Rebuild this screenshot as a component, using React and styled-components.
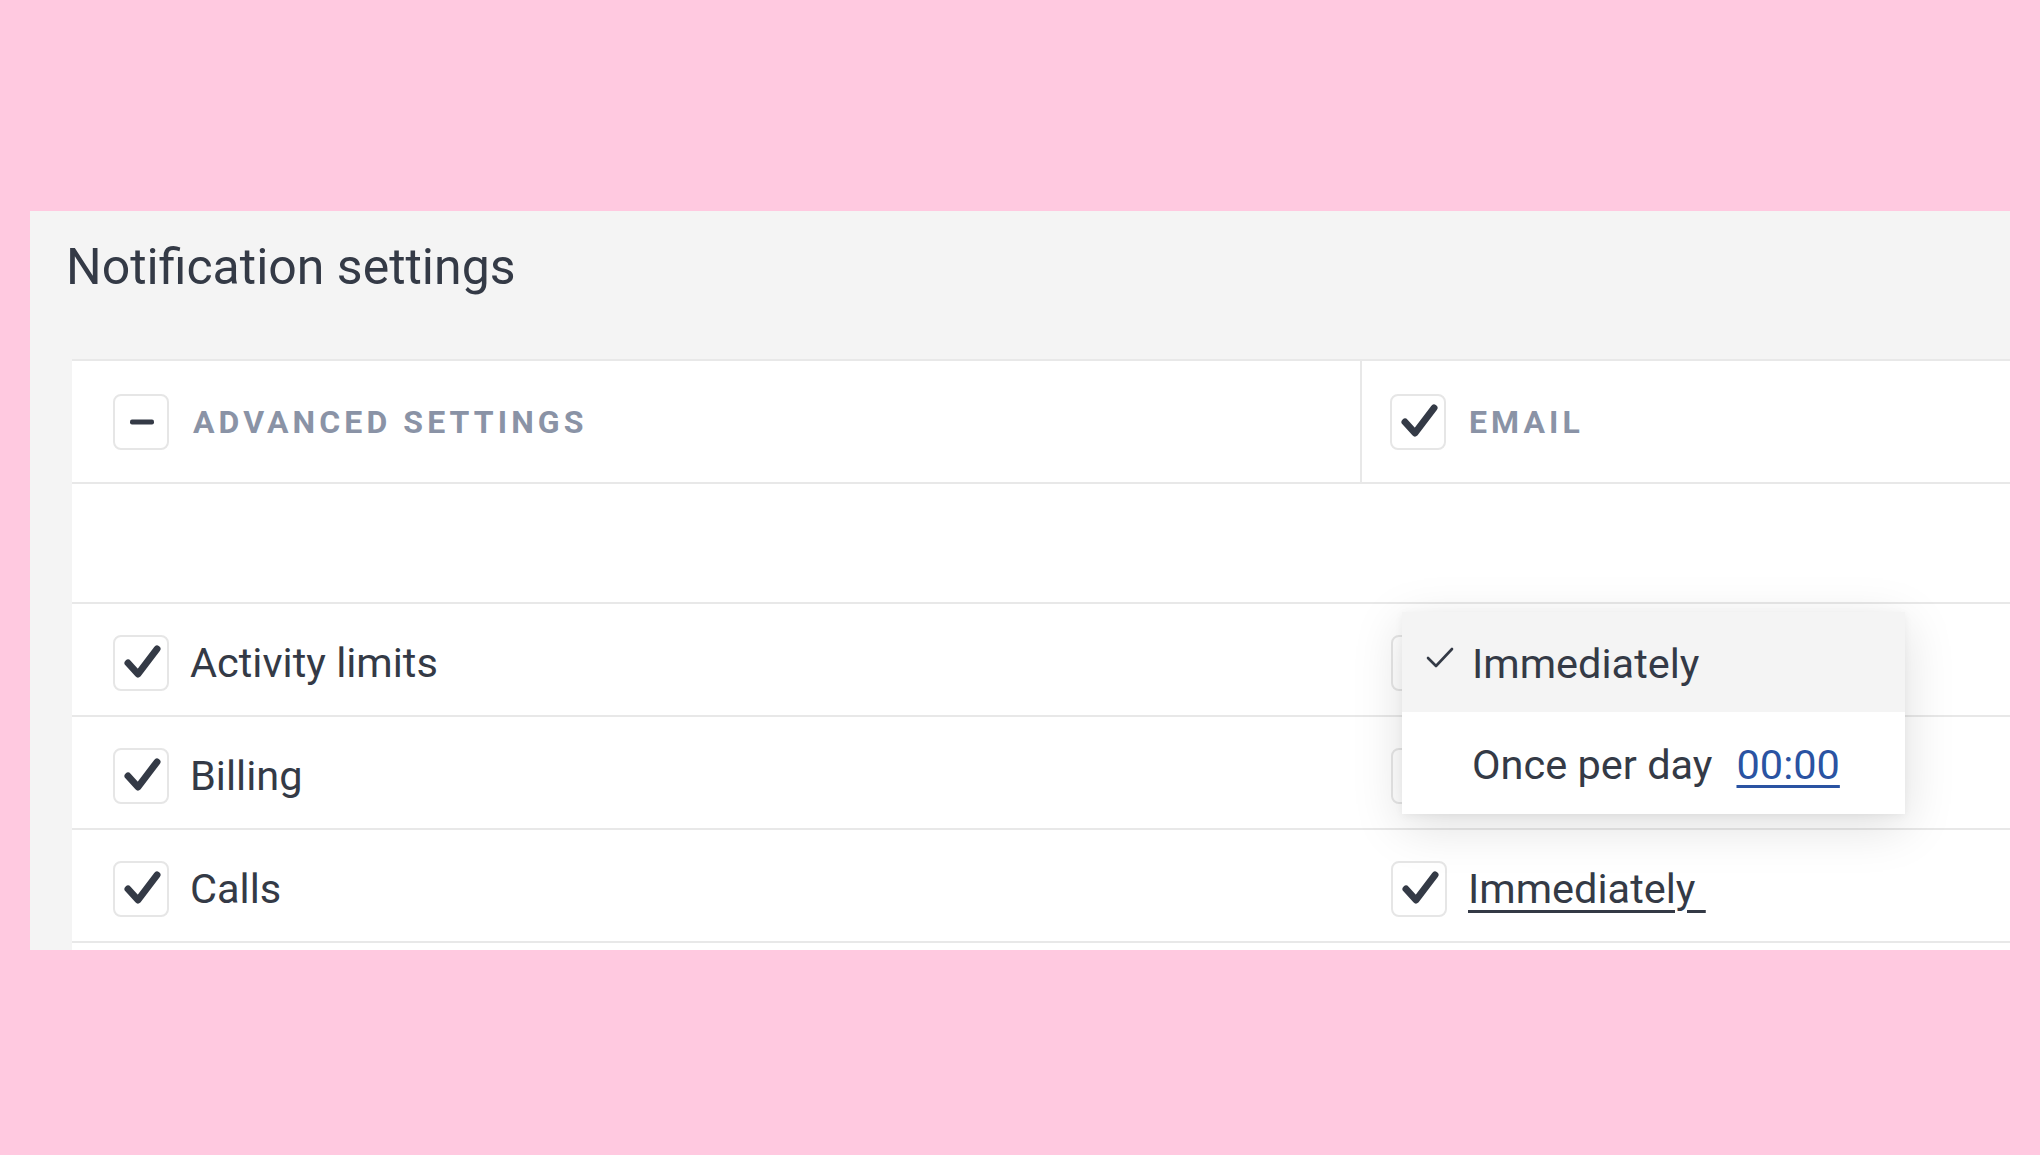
import React from 'react';
import styled, { createGlobalStyle } from 'styled-components';

const colors = {
  pink: '#ffc9e0',
  panel: '#f4f4f4',
  white: '#ffffff',
  line: '#e8e8e8',
  text: '#343a46',
  muted: '#8a93a6',
  link: '#2a53a2'
};

const GlobalStyle = createGlobalStyle`
  html, body {
    margin: 0;
    padding: 0;
    background: ${colors.pink};
  }

  body {
    font-family: Roboto, 'Noto Sans', sans-serif;
    color: ${colors.text};
  }
`;

const Page = styled.div`
  padding: 211px 0 0 30px;
  min-height: 1155px;
  box-sizing: border-box;
`;

const Panel = styled.section`
  width: 1980px;
  height: 739px;
  background: ${colors.panel};
  overflow: hidden;
`;

const Title = styled.h1`
  margin: 0;
  padding: 31px 0 0 36px;
  font-size: 50px;
  font-weight: 400;
  line-height: 1;
  color: ${colors.text};
`;

const Table = styled.div`
  margin: 67px 0 0 42px;
  background: ${colors.white};
  border-top: 2px solid ${colors.line};
  display: flex;
  flex-direction: column;
`;

const Row = styled.div`
  display: flex;
  align-items: stretch;
  box-sizing: border-box;
  height: ${(p) => p.height || 113}px;
  padding-top: ${(p) => p.offset || 0}px;
  border-bottom: 2px solid ${colors.line};
`;

const Cell = styled.div`
  position: relative;
  display: flex;
  align-items: center;
  gap: ${(p) => p.gap || 21}px;
  box-sizing: border-box;
  flex: ${(p) => (p.grow ? '1 1 auto' : '0 0 1290px')};
  padding-left: ${(p) => p.pad || 0}px;
  border-right: 2px solid ${(p) => (p.divider ? colors.line : 'transparent')};
`;

const Box = styled.span`
  flex: 0 0 auto;
  width: 56px;
  height: 56px;
  box-sizing: border-box;
  border: 2px solid #e6e6e6;
  border-radius: 8px;
  background: ${colors.white};
  position: relative;

  svg {
    position: absolute;
    left: -2px;
    top: -2px;
  }
`;

const HeadLabel = styled.span`
  font-size: 32px;
  font-weight: 700;
  letter-spacing: 4.1px;
  text-transform: uppercase;
  color: ${colors.muted};
  line-height: 1;
`;

const Label = styled.span`
  font-size: 41.5px;
  line-height: 1;
  color: ${colors.text};
`;

const Choice = styled.span`
  font-size: 41.5px;
  line-height: 1;
  color: ${colors.text};
  text-decoration: underline;
  text-decoration-thickness: 3px;
  text-underline-offset: 7px;
`;

const Menu = styled.div`
  position: absolute;
  left: 40px;
  top: 2px;
  width: 503px;
  background: ${colors.white};
  box-shadow: 0 12px 48px rgba(0, 0, 0, 0.13), 0 2px 8px rgba(0, 0, 0, 0.05);
  z-index: 5;
`;

const MenuItem = styled.div`
  position: relative;
  display: flex;
  align-items: center;
  box-sizing: border-box;
  height: ${(p) => p.height}px;
  padding: 4px 0 0 70px;
  background: ${(p) => (p.active ? colors.panel : colors.white)};
  font-size: 41.5px;
  line-height: 1;
  color: ${colors.text};

  svg {
    position: absolute;
    left: 0;
    top: 0;
  }
`;

const TimeLink = styled.a`
  margin-left: 24px;
  color: ${colors.link};
  text-decoration: underline;
  text-decoration-thickness: 3px;
  text-underline-offset: 6px;
  cursor: pointer;
`;

const CheckBox = ({ minus }) => (
  <Box>
    <svg width="56" height="56" viewBox="0 0 56 56">
      {minus ? (
        <rect x="17" y="25.5" width="24" height="5" rx="2" fill={colors.text} />
      ) : (
        <path
          d="M15 28 L25 39 L44 14"
          fill="none"
          stroke={colors.text}
          strokeWidth="7"
          strokeLinecap="round"
          strokeLinejoin="round"
        />
      )}
    </svg>
  </Box>
);

const TinyCheck = () => (
  <svg width="60" height="100" viewBox="0 0 60 100">
    <path
      d="M26 46 L34 54 L50 37"
      fill="none"
      stroke={colors.text}
      strokeWidth="2.6"
      strokeLinecap="round"
      strokeLinejoin="round"
    />
  </svg>
);

const topics = [
  { name: 'Activity limits', menu: true },
  { name: 'Billing', covered: true },
  { name: 'Calls' }
];

export default function App() {
  return (
    <Page>
      <GlobalStyle />
      <Panel>
        <Title>Notification settings</Title>

        <Table>
          <Row height={123}>
            <Cell pad={41} gap={24} divider>
              <CheckBox minus />
              <HeadLabel>Advanced settings</HeadLabel>
            </Cell>
            <Cell pad={28} gap={23} grow>
              <CheckBox />
              <HeadLabel>Email</HeadLabel>
            </Cell>
          </Row>

          <Row height={120} />

          {topics.map((topic) => (
            <Row key={topic.name} offset={6}>
              <Cell pad={41}>
                <CheckBox />
                <Label>{topic.name}</Label>
              </Cell>
              <Cell pad={29} gap={21} grow>
                <CheckBox />
                {!topic.menu && !topic.covered && <Choice>Immediately&nbsp;</Choice>}
                {topic.menu && (
                  <Menu>
                    <MenuItem active height={100}>
                      <TinyCheck />
                      Immediately
                    </MenuItem>
                    <MenuItem height={102}>
                      Once per day
                      <TimeLink>00:00</TimeLink>
                    </MenuItem>
                  </Menu>
                )}
              </Cell>
            </Row>
          ))}

          <Row height={113} />
        </Table>
      </Panel>
    </Page>
  );
}
